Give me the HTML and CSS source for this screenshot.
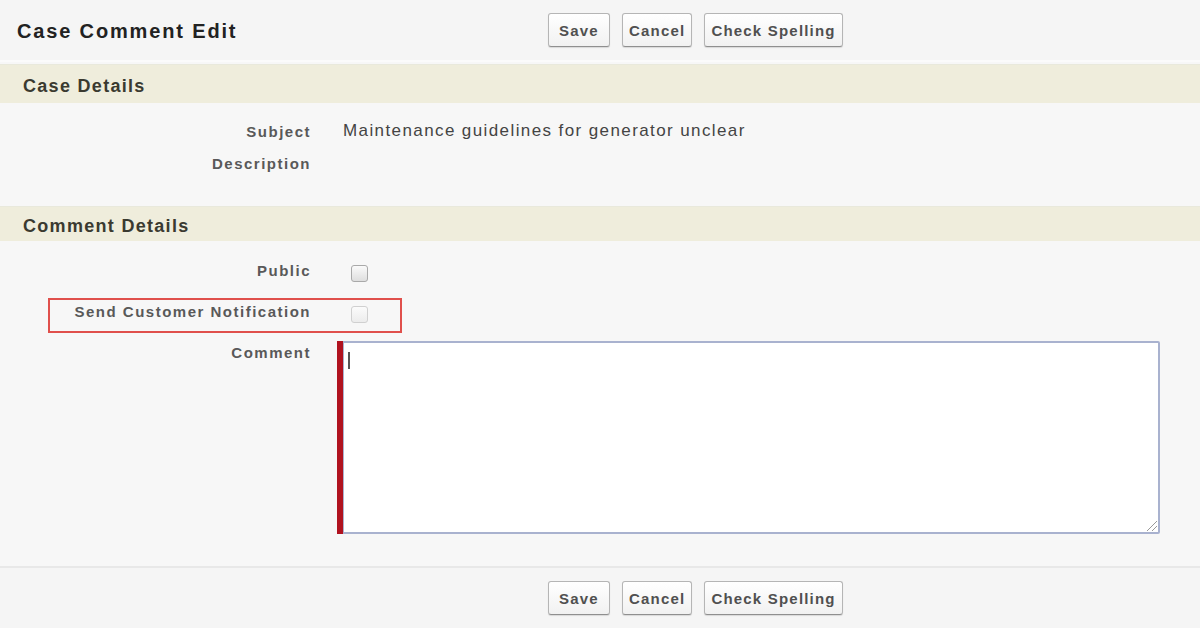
FILE: index.html
```html
<!DOCTYPE html>
<html lang="en">
<head>
    <meta charset="UTF-8">
    <title>Case Comment Edit</title>
    <link rel="stylesheet" href="styles.css">
</head>
<body>
    <div class="page">
        <div class="page-header">
            <h2 class="page-title">Case Comment Edit</h2>
            <div class="buttons">
                <button class="btn">Save</button>
                <button class="btn">Cancel</button>
                <button class="btn">Check Spelling</button>
            </div>
        </div>

        <div class="section-head">Case Details</div>
        <div class="section-body">
            <div class="row">
                <div class="label">Subject</div>
                <div class="value">Maintenance guidelines for generator unclear</div>
            </div>
            <div class="row">
                <div class="label">Description</div>
                <div class="value"></div>
            </div>
        </div>

        <div class="section-head short">Comment Details</div>
        <div class="section-body comments">
            <div class="row check-row">
                <div class="label">Public</div>
                <div class="value"><span class="checkbox"></span></div>
            </div>
            <div class="row check-row">
                <div class="label">Send Customer Notification</div>
                <div class="value"><span class="checkbox faded"></span></div>
                <div class="highlight-box"></div>
            </div>
            <div class="row comment-row">
                <div class="label">Comment</div>
                <div class="value">
                    <div class="required">
                        <div class="textarea"><span class="caret"></span><span class="grip"></span></div>
                    </div>
                </div>
            </div>
        </div>

        <div class="page-footer">
            <div class="buttons">
                <button class="btn">Save</button>
                <button class="btn">Cancel</button>
                <button class="btn">Check Spelling</button>
            </div>
        </div>
    </div>
</body>
</html>
```

FILE: styles.css
```css
body {
    margin: 0;
    padding: 0;
    background: #f7f7f7;
    font-family: "Liberation Sans", Arial, sans-serif;
    color: #333;
}

.page {
    width: 1200px;
    height: 628px;
    overflow: hidden;
}

.page-header {
    display: grid;
    grid-template-columns: 548px auto;
    align-items: center;
    height: 60px;
    background: #f5f5f5;
    border-bottom: 2px solid #fbfbfb;
}

.page-title {
    margin: 0 0 0 17px;
    font-size: 20px;
    letter-spacing: 1.85px;
    color: #222;
    position: relative;
    top: 1px;
}

.buttons {
    display: flex;
    gap: 12px;
}

.btn {
    height: 34px;
    padding: 0 6px;
    font-family: "Liberation Sans", Arial, sans-serif;
    font-size: 15px;
    font-weight: bold;
    letter-spacing: 1.2px;
    color: #505050;
    background: linear-gradient(#ffffff, #f1f1f1);
    border: 1px solid #b5b5b5;
    border-bottom-color: #8f8f8f;
    border-radius: 3px;
    box-shadow: 0 1px 1px rgba(0, 0, 0, 0.12);
}

.btn:first-child {
    width: 62px;
}

.section-head {
    height: 38px;
    line-height: 42px;
    padding-left: 23px;
    margin-top: 2px;
    background: #efeddc;
    border-top: 1px solid #e9e9dc;
    font-size: 18px;
    font-weight: bold;
    letter-spacing: 1.3px;
    color: #3a3a30;
}

.section-head.short {
    height: 34px;
    line-height: 38px;
}

.section-body {
    padding: 12px 0 25px;
}

.section-body.comments {
    padding: 9px 0 0;
}

.row {
    display: flex;
    align-items: center;
    min-height: 32px;
    position: relative;
}

.label {
    width: 311px;
    text-align: right;
    font-size: 15px;
    font-weight: bold;
    letter-spacing: 1.5px;
    color: #595959;
}

.value {
    margin-left: 32px;
    font-size: 17px;
    letter-spacing: 1.4px;
    color: #444;
}

.check-row {
    min-height: 41px;
}

.checkbox {
    display: block;
    width: 15px;
    height: 15px;
    margin: 6px 0 0 8px;
    border: 1px solid #a9a9a9;
    border-radius: 3px;
    background: linear-gradient(#fafafa, #dedede);
}

.checkbox.faded {
    border-color: #d0d0d0;
    background: linear-gradient(#fbfbfb, #ececec);
}

.highlight-box {
    position: absolute;
    left: 48px;
    top: 7px;
    width: 350px;
    height: 31px;
    border: 2px solid #e0504c;
}

.comment-row {
    align-items: flex-start;
    margin-top: 9px;
}

.comment-row .label {
    padding-top: 3px;
}

.comment-row .value {
    margin-left: 26px;
}

.required {
    border-left: 6px solid #b0121f;
}

.textarea {
    position: relative;
    width: 814px;
    height: 189px;
    background: #fff;
    border: 2px solid #a9b2cf;
    border-left-width: 1px;
    border-radius: 0 2px 2px 0;
}

.caret {
    position: absolute;
    left: 4px;
    top: 9px;
    width: 2px;
    height: 17px;
    background: #555;
}

.grip {
    position: absolute;
    right: 1px;
    bottom: 1px;
    width: 10px;
    height: 10px;
    background: linear-gradient(135deg, transparent 45%, #999 46%, #999 54%, transparent 55%, transparent 70%, #999 71%, #999 79%, transparent 80%);
}

.page-footer {
    margin-top: 32px;
    border-top: 2px solid #e8e8e8;
    padding: 13px 0 0 548px;
    background: #f5f5f5;
    height: 60px;
}
```
